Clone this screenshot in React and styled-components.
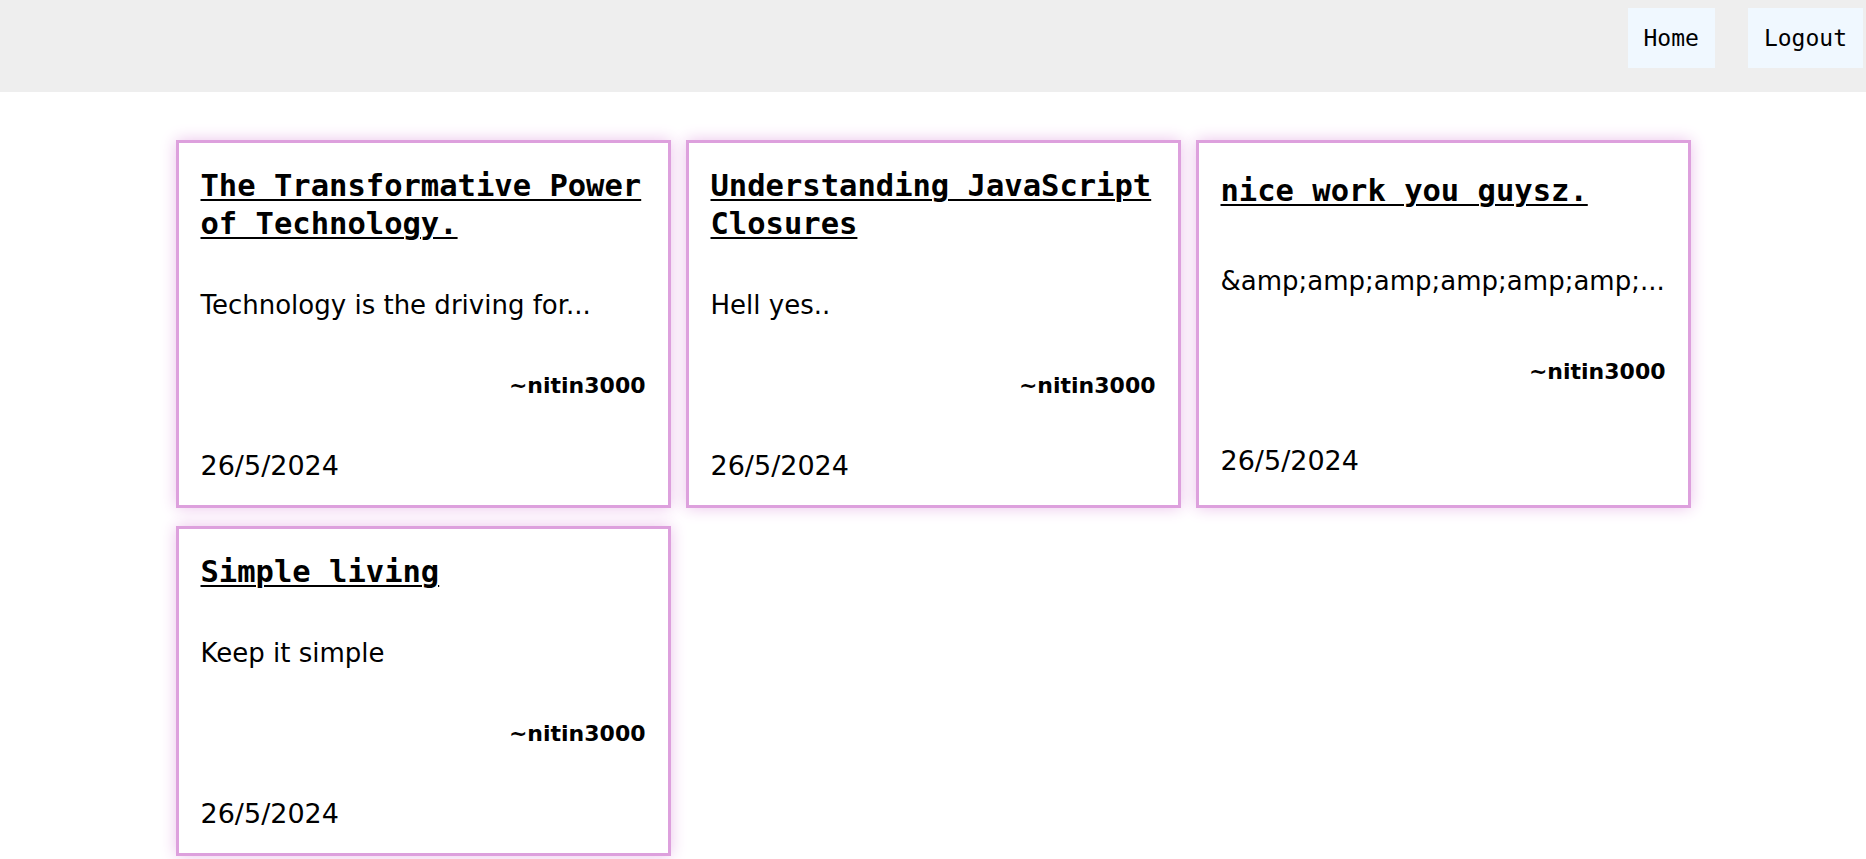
import styled, { createGlobalStyle } from "styled-components";

const posts = [
  {
    id: 1,
    title: "The Transformative Power of Technology.",
    body: "Technology is the driving for...",
    author: "nitin3000",
    date: "26/5/2024"
  },
  {
    id: 2,
    title: "Understanding JavaScript Closures",
    body: "Hell yes..",
    author: "nitin3000",
    date: "26/5/2024"
  },
  {
    id: 3,
    title: "nice work you guysz.",
    body: "&amp;amp;amp;amp;amp;amp;...",
    author: "nitin3000",
    date: "26/5/2024"
  },
  {
    id: 4,
    title: "Simple living",
    body: "Keep it simple",
    author: "nitin3000",
    date: "26/5/2024"
  }
];

const App = () => {
  return (
    <>
      <GlobalStyle />
      <Navbar>
        <NavButton>Home</NavButton>
        <NavButton>Logout</NavButton>
      </Navbar>
      <PostGrid>
        {posts.map((post) => (
          <PostCard key={post.id}>
            <PostTitle href="#">{post.title}</PostTitle>
            <PostBody>{post.body}</PostBody>
            <PostAuthor>~{post.author}</PostAuthor>
            <PostDate>{post.date}</PostDate>
          </PostCard>
        ))}
      </PostGrid>
    </>
  );
};

export default App;

const GlobalStyle = createGlobalStyle`
  body {
    margin: 0;
    background-color: #ffffff;
    font-family: "DejaVu Sans", sans-serif;
  }
`;

const Navbar = styled.nav`
  display: flex;
  justify-content: flex-end;
  align-items: flex-start;
  gap: 33px;
  box-sizing: border-box;
  height: 92px;
  padding: 8px 3px 0 0;
  background-color: #eeeeee;
`;

const NavButton = styled.button`
  height: 60px;
  padding: 0 16px;
  font-family: "DejaVu Sans Mono", monospace;
  font-size: 23px;
  color: #000000;
  background-color: #f0f8ff;
  border: none;
  cursor: pointer;
`;

const PostGrid = styled.main`
  display: grid;
  grid-template-columns: repeat(3, 495px);
  justify-content: center;
  column-gap: 15px;
  row-gap: 18px;
  margin-top: 48px;
  padding-bottom: 40px;
`;

const PostCard = styled.div`
  display: flex;
  flex-direction: column;
  justify-content: space-around;
  box-sizing: border-box;
  padding: 24px 22px 24px;
  border: 3px solid #dda0dd;
  box-shadow: 0 0 15px #ebc3eb;
  background-color: #ffffff;
  font-family: "Comic Sans MS", "DejaVu Sans", sans-serif;
  color: #000000;
`;

const PostTitle = styled.a`
  display: block;
  font-family: "DejaVu Sans Mono", monospace;
  font-size: 30.5px;
  font-weight: bold;
  line-height: 38px;
  color: #000000;
  text-decoration: underline;
  text-decoration-thickness: 2px;
  text-underline-offset: 3px;
`;

const PostBody = styled.p`
  margin: 47px 0 0;
  font-size: 26px;
  line-height: 30px;
`;

const PostAuthor = styled.span`
  display: block;
  margin-top: 51px;
  text-align: right;
  font-size: 22px;
  font-weight: bold;
  line-height: 30px;
`;

const PostDate = styled.span`
  display: block;
  margin-top: 50px;
  font-size: 27px;
  line-height: 30px;
`;
